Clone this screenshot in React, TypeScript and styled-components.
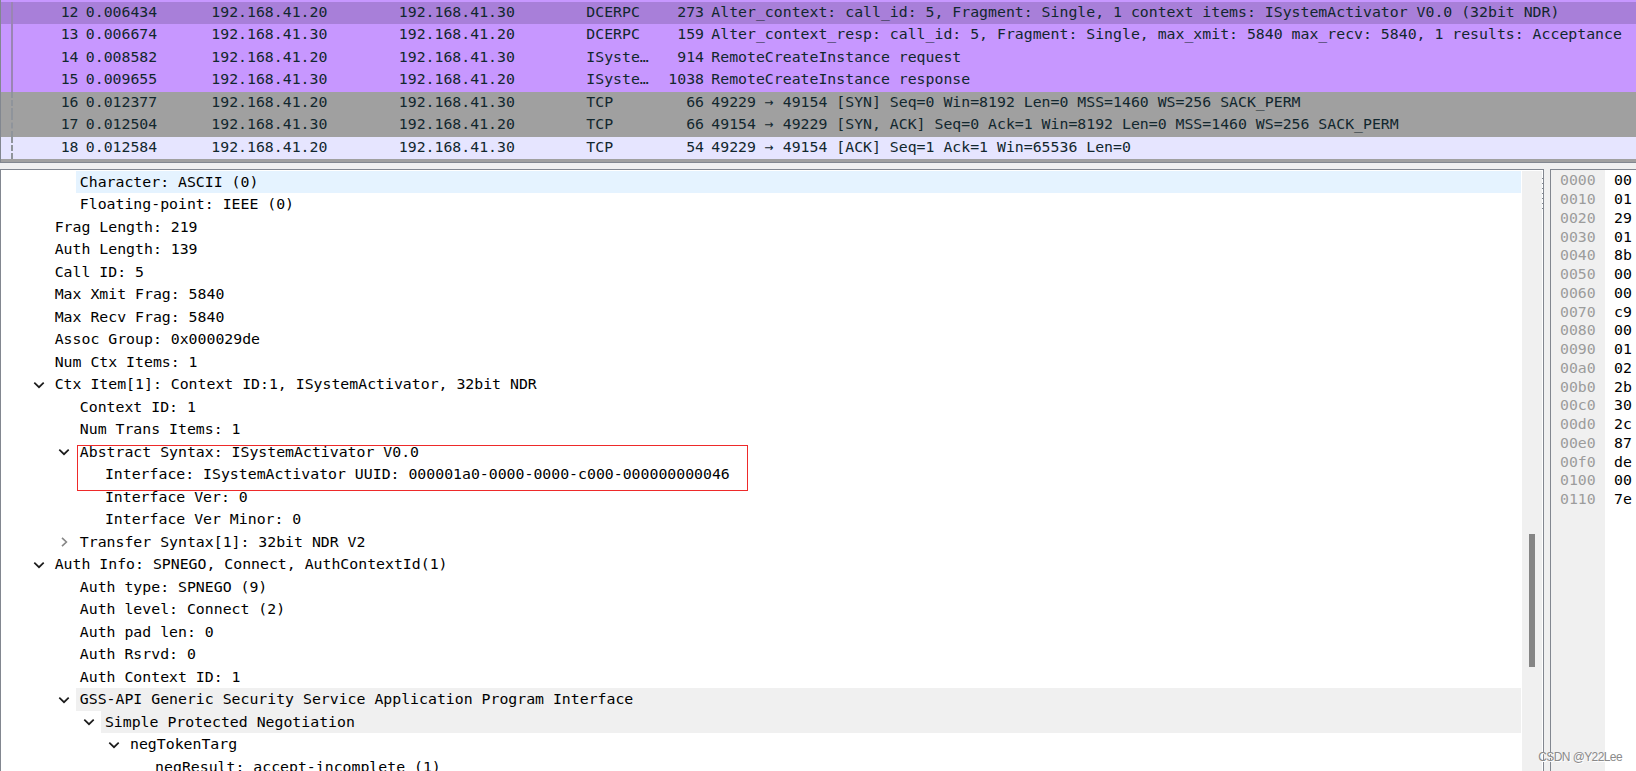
import React from 'react';
import styled, { createGlobalStyle } from 'styled-components';

interface Packet {
  no: number;
  time: string;
  source: string;
  destination: string;
  protocol: string;
  length: number;
  info: string;
  kind: 'rpc' | 'syn' | 'tcp';
  selected?: boolean;
}

interface DetailNode {
  depth: number;
  text: string;
  state?: 'open' | 'closed';
  tone?: 'hover' | 'section';
}

const A = '192.168.41.20';
const B = '192.168.41.30';

const packets: Packet[] = [
  { no: 12, time: '0.006434', source: A, destination: B, protocol: 'DCERPC', length: 273, info: 'Alter_context: call_id: 5, Fragment: Single, 1 context items: ISystemActivator V0.0 (32bit NDR)', kind: 'rpc', selected: true },
  { no: 13, time: '0.006674', source: B, destination: A, protocol: 'DCERPC', length: 159, info: 'Alter_context_resp: call_id: 5, Fragment: Single, max_xmit: 5840 max_recv: 5840, 1 results: Acceptance', kind: 'rpc' },
  { no: 14, time: '0.008582', source: A, destination: B, protocol: 'ISyste…', length: 914, info: 'RemoteCreateInstance request', kind: 'rpc' },
  { no: 15, time: '0.009655', source: B, destination: A, protocol: 'ISyste…', length: 1038, info: 'RemoteCreateInstance response', kind: 'rpc' },
  { no: 16, time: '0.012377', source: A, destination: B, protocol: 'TCP', length: 66, info: '49229 → 49154 [SYN] Seq=0 Win=8192 Len=0 MSS=1460 WS=256 SACK_PERM', kind: 'syn' },
  { no: 17, time: '0.012504', source: B, destination: A, protocol: 'TCP', length: 66, info: '49154 → 49229 [SYN, ACK] Seq=0 Ack=1 Win=8192 Len=0 MSS=1460 WS=256 SACK_PERM', kind: 'syn' },
  { no: 18, time: '0.012584', source: A, destination: B, protocol: 'TCP', length: 54, info: '49229 → 49154 [ACK] Seq=1 Ack=1 Win=65536 Len=0', kind: 'tcp' },
];

const details: DetailNode[] = [
  { depth: 2, text: 'Character: ASCII (0)', tone: 'hover' },
  { depth: 2, text: 'Floating-point: IEEE (0)' },
  { depth: 1, text: 'Frag Length: 219' },
  { depth: 1, text: 'Auth Length: 139' },
  { depth: 1, text: 'Call ID: 5' },
  { depth: 1, text: 'Max Xmit Frag: 5840' },
  { depth: 1, text: 'Max Recv Frag: 5840' },
  { depth: 1, text: 'Assoc Group: 0x000029de' },
  { depth: 1, text: 'Num Ctx Items: 1' },
  { depth: 1, text: 'Ctx Item[1]: Context ID:1, ISystemActivator, 32bit NDR', state: 'open' },
  { depth: 2, text: 'Context ID: 1' },
  { depth: 2, text: 'Num Trans Items: 1' },
  { depth: 2, text: 'Abstract Syntax: ISystemActivator V0.0', state: 'open' },
  { depth: 3, text: 'Interface: ISystemActivator UUID: 000001a0-0000-0000-c000-000000000046' },
  { depth: 3, text: 'Interface Ver: 0' },
  { depth: 3, text: 'Interface Ver Minor: 0' },
  { depth: 2, text: 'Transfer Syntax[1]: 32bit NDR V2', state: 'closed' },
  { depth: 1, text: 'Auth Info: SPNEGO, Connect, AuthContextId(1)', state: 'open' },
  { depth: 2, text: 'Auth type: SPNEGO (9)' },
  { depth: 2, text: 'Auth level: Connect (2)' },
  { depth: 2, text: 'Auth pad len: 0' },
  { depth: 2, text: 'Auth Rsrvd: 0' },
  { depth: 2, text: 'Auth Context ID: 1' },
  { depth: 2, text: 'GSS-API Generic Security Service Application Program Interface', state: 'open', tone: 'section' },
  { depth: 3, text: 'Simple Protected Negotiation', state: 'open', tone: 'section' },
  { depth: 4, text: 'negTokenTarg', state: 'open' },
  { depth: 5, text: 'negResult: accept-incomplete (1)' },
];

const hexBytes = ['00', '01', '29', '01', '8b', '00', '00', 'c9', '00', '01', '02', '2b', '30', '2c', '87', 'de', '00', '7e'];

const ANNOTATED_ROW = 12;

const Chevron: React.FC<{ open: boolean }> = ({ open }) => (
  <svg width="12" height="12" viewBox="0 0 12 12" fill="none">
    {open ? (
      <path d="M1.3 3.6 6 8.2l4.7-4.6" stroke="#1c1c1c" strokeWidth="1.7" />
    ) : (
      <path d="M4 1.8 8.4 6 4 10.2" stroke="#868686" strokeWidth="1.6" />
    )}
  </svg>
);

const App: React.FC = () => {
  return (
    <Window>
      <GlobalStyle />
      <PacketList>
        {packets.map((p) => (
          <PacketRow key={p.no} $kind={p.kind} $selected={p.selected}>
            <Conversation $solid={p.kind === 'rpc'} />
            <Cell $align="right">{p.no}</Cell>
            <Cell>{p.time}</Cell>
            <Cell>{p.source}</Cell>
            <Cell>{p.destination}</Cell>
            <Cell>{p.protocol}</Cell>
            <Cell $align="right">{p.length}</Cell>
            <Cell>{p.info}</Cell>
          </PacketRow>
        ))}
        <NextRow />
      </PacketList>
      <Panes>
        <DetailPane>
          <Tree>
            {details.map((node, i) => (
              <TreeRow key={i} $depth={node.depth}>
                <Toggle>{node.state && <Chevron open={node.state === 'open'} />}</Toggle>
                <Label $tone={node.tone}>{node.text}</Label>
                {i === ANNOTATED_ROW && <Annotation />}
              </TreeRow>
            ))}
          </Tree>
          <Scrollbar>
            <Thumb />
          </Scrollbar>
          <Grip />
        </DetailPane>
        <BytesPane>
          <Offsets>
            {hexBytes.map((_, i) => (
              <HexLine key={i}>{(i * 16).toString(16).padStart(4, '0')}</HexLine>
            ))}
          </Offsets>
          <Bytes>
            {hexBytes.map((byte, i) => (
              <HexLine key={i}>{byte}</HexLine>
            ))}
          </Bytes>
        </BytesPane>
      </Panes>
      <Watermark>CSDN @Y22Lee</Watermark>
    </Window>
  );
};

const rowColors = {
  rpc: '#c797ff',
  syn: '#a0a0a0',
  tcp: '#e6e5ff',
};

const toneColors = {
  hover: '#e5f3ff',
  section: '#f0f0f0',
};

const GlobalStyle = createGlobalStyle`
  body {
    margin: 0;
    overflow: hidden;
  }
`;

const Window = styled.div`
  position: relative;
  display: flex;
  flex-direction: column;
  width: 1636px;
  height: 771px;
  overflow: hidden;
  background: #f0f0f0;
  font-family: 'DejaVu Sans Mono', 'Liberation Mono', monospace;
  font-size: 14.83px;
  color: #000;
`;

const PacketList = styled.div`
  flex: none;
  box-sizing: border-box;
  height: 163px;
  padding-top: 2px;
  overflow: hidden;
  background: #c797ff;
  border-left: 1px solid #828790;
  border-bottom: 1px solid #828790;
`;

const PacketRow = styled.div<{ $kind: Packet['kind']; $selected?: boolean }>`
  display: grid;
  grid-template-columns: 23px 54.5px 125.5px 187.5px 187.5px 64px 61px 1fr;
  height: 22px;
  line-height: 20px;
  color: #12272e;
  background: ${(props) => (props.$selected ? '#a87fd9' : rowColors[props.$kind])};

  &:nth-child(even) {
    height: 23px;
  }
`;

const Conversation = styled.div<{ $solid: boolean }>`
  width: 0;
  margin-left: 10px;
  border-left: 2px ${(props) => (props.$solid ? 'solid #9a85b4' : 'dashed #8f949b')};
`;

const Cell = styled.div<{ $align?: 'right' }>`
  padding-left: ${(props) => (props.$align ? 0 : 7.3)}px;
  text-align: ${(props) => props.$align || 'left'};
  white-space: pre;
`;

const NextRow = styled.div`
  height: 4px;
  background: #a0a0a0;
`;

const Panes = styled.div`
  flex: 1;
  display: flex;
  gap: 6px;
  min-height: 0;
  margin-top: 6px;
`;

const DetailPane = styled.div`
  position: relative;
  box-sizing: border-box;
  display: flex;
  width: 1544px;
  padding-top: 1px;
  background: #fff;
  border: 1px solid #828790;
  border-bottom: 0;
`;

const Tree = styled.div`
  flex: 1;
  min-width: 0;
  overflow: hidden;
  margin-right: 1px;
`;

const TreeRow = styled.div<{ $depth: number }>`
  position: relative;
  display: flex;
  height: 22px;
  padding-left: ${(props) => 2.6 + props.$depth * 25.1}px;
  line-height: 22px;

  &:nth-child(even) {
    height: 23px;
  }
`;

const Toggle = styled.div`
  flex: none;
  display: flex;
  align-items: center;
  width: 22px;
  padding-left: 4px;
  box-sizing: border-box;
`;

const Label = styled.div<{ $tone?: 'hover' | 'section' }>`
  flex: 1;
  padding-left: 4px;
  white-space: pre;
  background: ${(props) => (props.$tone ? toneColors[props.$tone] : 'transparent')};
`;

const Annotation = styled.div`
  position: absolute;
  top: 4px;
  left: 76px;
  z-index: 1;
  box-sizing: border-box;
  width: 671px;
  height: 46px;
  border: 1px solid #ee2a2a;
`;

const Scrollbar = styled.div`
  width: 20px;
  margin-right: 1px;
  padding-top: 363px;
  background: #f0f0f0;
`;

const Thumb = styled.div`
  width: 6px;
  height: 133px;
  margin-left: 7px;
  background: #858585;
`;

const Grip = styled.div`
  position: absolute;
  top: 8px;
  right: 0;
  width: 1px;
  height: 32px;
  background: repeating-linear-gradient(#828790 0 1px, transparent 1px 5px);
`;

const BytesPane = styled.div`
  flex: 1;
  display: flex;
  background: #fff;
  border-top: 1px solid #828790;
  border-left: 1px solid #828790;
`;

const HexLine = styled.div`
  height: 19px;
  line-height: 19px;

  &:nth-child(4n) {
    height: 18px;
  }
`;

const Offsets = styled.div`
  box-sizing: border-box;
  width: 54px;
  padding-left: 9px;
  color: #9c9c9c;
  background: #f0f0f0;
`;

const Bytes = styled.div`
  padding-left: 9px;
`;

const Watermark = styled.div`
  position: absolute;
  right: 14px;
  bottom: 7px;
  font-family: 'Liberation Sans', Arial, sans-serif;
  font-size: 12px;
  letter-spacing: -0.6px;
  color: #8a8a8a;
  text-shadow: 1px 1px 0 #fff;
`;

export default App;
